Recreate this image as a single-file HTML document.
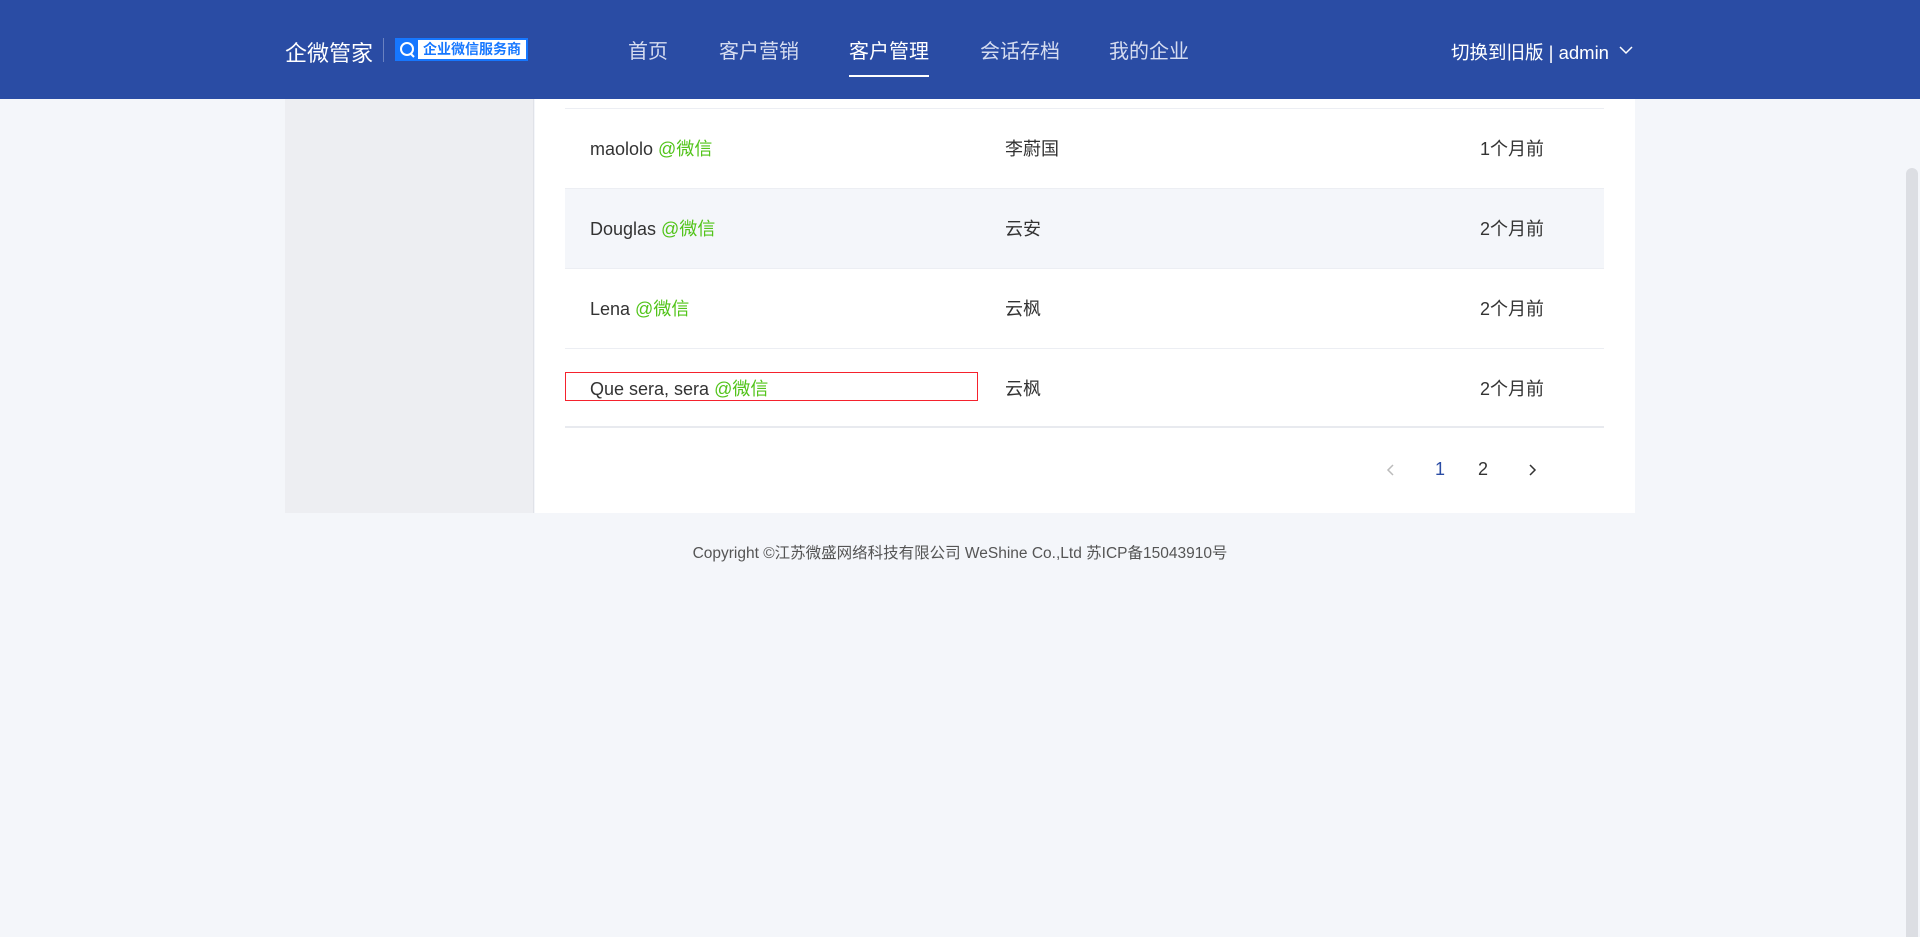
<!DOCTYPE html>
<html><head><meta charset="utf-8"><style>
*{margin:0;padding:0;box-sizing:border-box}
body{width:1920px;height:937px;background:#f4f6fa;font-family:"Liberation Sans","Noto Sans CJK SC",sans-serif;position:relative;overflow:hidden;color:#333}
.hd{position:absolute;left:0;top:0;width:1920px;height:99px;background:#2a4ca4;color:#fff}
.abs{position:absolute;white-space:nowrap}
.nav{font-size:20px;color:#d5dcf0;top:35px}
.side{position:absolute;left:285px;top:99px;width:249px;height:414px;background:#edeef2;border-right:1px solid #e0e2e8}
.main{position:absolute;left:535px;top:99px;width:1100px;height:414px;background:#fff}
.row{position:absolute;left:565px;width:1039px;height:80px;border-top:1px solid #eceef3;font-size:18px;color:#333}
.row span{position:absolute;top:26px;white-space:nowrap}
.g{color:#52c41a;font-style:normal}
</style></head><body>
<div class="hd">
<div class="abs" style="left:285px;top:36px;font-size:22px;color:#fff">企微管家</div>
<div class="abs" style="left:383px;top:38px;width:1px;height:24px;background:#6a82c0"></div>
<div class="abs" style="left:395px;top:38px;width:133px;height:23px;background:#1677ff;border:1px solid #1677ff">
<svg width="20" height="20" viewBox="0 0 20 20" style="position:absolute;left:2px;top:1px"><circle cx="9" cy="9" r="6" fill="none" stroke="#fff" stroke-width="2"/><path d="M13 14l3 3" stroke="#fff" stroke-width="2"/></svg>
<div style="position:absolute;left:22px;top:1px;width:108px;height:19px;background:#fff;color:#1677ff;font-size:14px;line-height:19px;text-align:center;font-weight:bold">企业微信服务商</div></div>
<div class="abs nav" style="left:628px">首页</div>
<div class="abs nav" style="left:719px">客户营销</div>
<div class="abs nav" style="left:849px;color:#fff">客户管理</div>
<div class="abs" style="left:849px;top:75px;width:80px;height:2px;background:#fff"></div>
<div class="abs nav" style="left:980px">会话存档</div>
<div class="abs nav" style="left:1109px">我的企业</div>
<div class="abs" style="left:1451px;top:39px;font-size:18.5px;color:#fff">切换到旧版 | admin</div>
<svg class="abs" style="left:1619px;top:45px" width="14" height="10" viewBox="0 0 14 10"><path d="M1 2l6 6 6-6" fill="none" stroke="#fff" stroke-width="1.5"/></svg>
</div>
<div class="side"></div>
<div class="main"></div>
<div class="row" style="top:108px"><span style="left:25px">maololo <i class="g">@微信</i></span><span style="left:440px">李蔚国</span><span style="left:915px">1个月前</span></div>
<div class="row" style="top:188px;background:#f4f6fa"><span style="left:25px">Douglas <i class="g">@微信</i></span><span style="left:440px">云安</span><span style="left:915px">2个月前</span></div>
<div class="row" style="top:268px"><span style="left:25px">Lena <i class="g">@微信</i></span><span style="left:440px">云枫</span><span style="left:915px">2个月前</span></div>
<div class="row" style="top:348px;border-bottom:2px solid #e8eaef"><span style="left:25px">Que sera, sera <i class="g">@微信</i></span><span style="left:440px">云枫</span><span style="left:915px">2个月前</span></div>
<div class="abs" style="left:565px;top:372px;width:413px;height:29px;border:1px solid #f5222d"></div>
<svg class="abs" style="left:1385px;top:462px" width="12" height="16" viewBox="0 0 12 16"><path d="M8 3l-5 5 5 5" fill="none" stroke="#bbb" stroke-width="1.5"/></svg>
<div class="abs" style="left:1435px;top:459px;font-size:18px;color:#2a4ca4">1</div>
<div class="abs" style="left:1478px;top:459px;font-size:18px;color:#333">2</div>
<svg class="abs" style="left:1526px;top:462px" width="12" height="16" viewBox="0 0 12 16"><path d="M4 3l5 5-5 5" fill="none" stroke="#333" stroke-width="1.5"/></svg>
<div class="abs" style="left:0;width:1920px;text-align:center;top:541px;font-size:15.5px;color:#555">Copyright ©江苏微盛网络科技有限公司 WeShine Co.,Ltd 苏ICP备15043910号</div>
<div class="abs" style="left:1906px;top:168px;width:12px;height:769px;background:#dcdee3;border-radius:6px 6px 0 0"></div>
</body></html>
